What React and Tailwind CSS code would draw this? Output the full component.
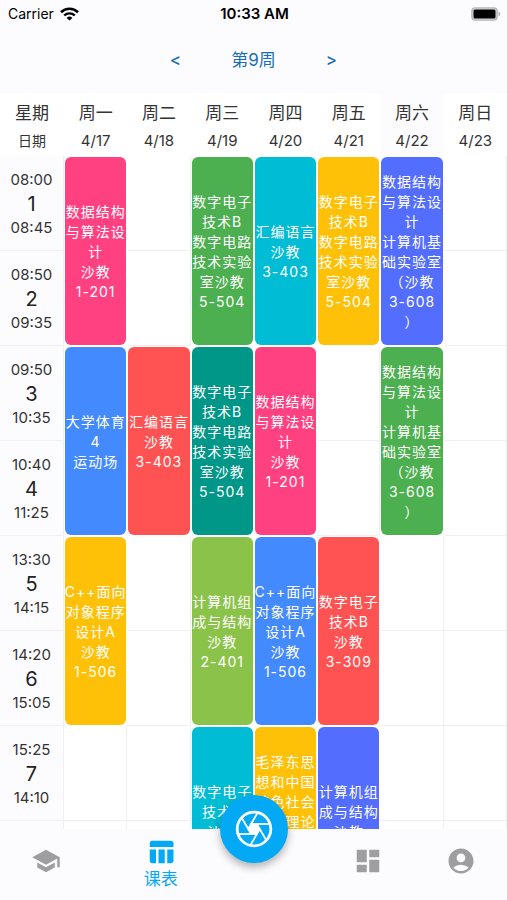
import React from "react";
import { MdSchool, MdTableChart, MdDashboard, MdAccountCircle } from "react-icons/md";

const days = [
  ["周一", "4/17"],
  ["周二", "4/18"],
  ["周三", "4/19"],
  ["周四", "4/20"],
  ["周五", "4/21"],
  ["周六", "4/22"],
  ["周日", "4/23"],
];

const course = (color, ...lines) => ({ color, lines });

const electronicsLab = ["数字电子", "技术B", "数字电路", "技术实验", "室沙教", "5-504"];
const structuresLab = ["数据结构", "与算法设", "计", "计算机基", "础实验室", "（沙教", "3-608", "）"];

// Each block covers two consecutive lessons
const blocks = [
  {
    lessons: [
      ["08:00", 1, "08:45"],
      ["08:50", 2, "09:35"],
    ],
    courses: [
      course("bg-[#ff4081]", "数据结构", "与算法设", "计", "沙教", "1-201"),
      null,
      course("bg-[#4caf50]", ...electronicsLab),
      course("bg-[#00bcd4]", "汇编语言", "沙教", "3-403"),
      course("bg-[#ffc107]", ...electronicsLab),
      course("bg-[#536dfe]", ...structuresLab),
      null,
    ],
  },
  {
    lessons: [
      ["09:50", 3, "10:35"],
      ["10:40", 4, "11:25"],
    ],
    courses: [
      course("bg-[#448aff]", "大学体育", "4", "运动场"),
      course("bg-[#ff5252]", "汇编语言", "沙教", "3-403"),
      course("bg-[#009688]", ...electronicsLab),
      course("bg-[#ff4081]", "数据结构", "与算法设", "计", "沙教", "1-201"),
      null,
      course("bg-[#4caf50]", ...structuresLab),
      null,
    ],
  },
  {
    lessons: [
      ["13:30", 5, "14:15"],
      ["14:20", 6, "15:05"],
    ],
    courses: [
      course("bg-[#ffc107]", "C++面向", "对象程序", "设计A", "沙教", "1-506"),
      null,
      course("bg-[#8bc34a]", "计算机组", "成与结构", "沙教", "2-401"),
      course("bg-[#448aff]", "C++面向", "对象程序", "设计A", "沙教", "1-506"),
      course("bg-[#ff5252]", "数字电子", "技术B", "沙教", "3-309"),
      null,
      null,
    ],
  },
  {
    lessons: [["15:25", 7, "14:10"], null],
    courses: [
      null,
      null,
      course("bg-[#00bcd4]", "数字电子", "技术B", "沙教", "3-309"),
      course("bg-[#ffc107]", "毛泽东思", "想和中国", "特色社会", "主义理论", "体系概论", "沙教", "1-201"),
      course("bg-[#536dfe]", "计算机组", "成与结构", "沙教", "2-401"),
      null,
      null,
    ],
  },
];

function StatusBar() {
  return (
    <div className="grid h-7 grid-cols-3 items-center pr-1.5 pl-2 text-sm text-black">
      <div className="flex items-center gap-1.5">
        <span>Carrier</span>
        <svg className="h-3.5 w-[19px]" viewBox="0 0 19 14" fill="none" stroke="currentColor" aria-hidden="true">
          <path d="M1 5.2a12.2 12.2 0 0 1 17 0" strokeWidth="2.6" />
          <path d="M4.200 8.500a7.600 7.600 0 0 1 10.600 0" strokeWidth="2.4" />
          <path d="M9.5 13.6 6.600 10.900a4.200 4.200 0 0 1 5.800 0z" fill="currentColor" stroke="none" />
        </svg>
      </div>
      <span className="text-center text-[15px] font-semibold">10:33 AM</span>
      <svg className="h-3.5 w-[30px] justify-self-end" viewBox="0 0 30 14" aria-hidden="true">
        <rect x="0.9" y="0.9" width="25.2" height="12.2" rx="3.4" fill="#d9d9db" stroke="#b4b4b6" strokeWidth="1.4" />
        <rect x="2.5" y="2.5" width="22" height="9" rx="1.5" fill="#000" />
        <path d="M27.500 4.600c1.200.4 1.800 1.300 1.800 2.400s-.6 2-1.800 2.400z" fill="#b4b4b6" />
      </svg>
    </div>
  );
}

function LessonTime({ lesson }) {
  return (
    <th scope="row" className="h-[95px] border-r border-b border-[#f0f0f3] bg-[#fcfcff] p-0 font-normal">
      {lesson && (
        <div className="flex flex-col items-center pt-0.5 text-[15px] text-[#333]">
          <span className="leading-6">{lesson[0]}</span>
          <span className="text-xl leading-6 text-[#222]">{lesson[1]}</span>
          <span className="leading-6">{lesson[2]}</span>
        </div>
      )}
    </th>
  );
}

function CourseCell({ item }) {
  return (
    <td rowSpan={2} className="h-[190px] p-px">
      <div
        className={`flex h-full flex-col items-center justify-center rounded-md pt-0.5 text-sm leading-5 tracking-[1px] whitespace-nowrap text-white ${item.color}`}
      >
        {item.lines.map((line, i) => (
          <span key={i}>{line}</span>
        ))}
      </div>
    </td>
  );
}

function EmptyCell() {
  return <td className="h-[95px] border-r border-b border-[#f0f0f3] p-0" />;
}

function Timetable() {
  return (
    <table className="w-full table-fixed border-separate border-spacing-0">
      <thead>
        <tr className="h-[63px]">
          <th scope="col" className="w-16 p-0 font-normal text-[#333]">
            <div className="flex flex-col pt-1">
              <span className="text-[17px] leading-7">星期</span>
              <span className="text-sm leading-7">日期</span>
            </div>
          </th>
          {days.map(([day, date]) => (
            <th
              key={day}
              scope="col"
              className={`p-0 font-normal text-[#333] ${day === "周六" ? "bg-[#fcfcff]" : ""}`}
            >
              <div className="flex flex-col pt-1">
                <span className="text-[17px] leading-7">{day}</span>
                <span className="text-[15px] leading-7">{date}</span>
              </div>
            </th>
          ))}
        </tr>
      </thead>
      <tbody>
        {blocks.map((block, b) => (
          <React.Fragment key={b}>
            <tr>
              <LessonTime lesson={block.lessons[0]} />
              {block.courses.map((item, d) => (item ? <CourseCell key={d} item={item} /> : <EmptyCell key={d} />))}
            </tr>
            <tr>
              <LessonTime lesson={block.lessons[1]} />
              {block.courses.map((item, d) => (item ? null : <EmptyCell key={d} />))}
            </tr>
          </React.Fragment>
        ))}
      </tbody>
    </table>
  );
}

function ShutterIcon() {
  return (
    <svg className="size-10" viewBox="0 0 40 40" fill="none" stroke="currentColor" aria-hidden="true">
      <circle cx="20" cy="20" r="16.8" strokeWidth="2.8" />
      <path d="M17 15h6l3 5-3 5h-6l-3-5z" fill="currentColor" stroke="none" />
      <g strokeWidth="1.8">
        {[0, 60, 120, 180, 240, 300].map((angle) => (
          <path key={angle} d="M16.500 15 H36" transform={`rotate(${angle} 20 20)`} />
        ))}
      </g>
    </svg>
  );
}

function BottomNav() {
  return (
    <nav className="relative grid h-[71px] shrink-0 grid-cols-[1fr_136px_1fr_1fr_1fr] bg-[#fcfcff] text-[#9e9e9e]">
      <button type="button" aria-label="学校" className="flex h-16 items-center justify-center">
        <MdSchool size={30} />
      </button>
      <button
        type="button"
        className="flex flex-col items-center pt-2 text-[17px] leading-6 text-[#03a9f4]"
      >
        <MdTableChart size={30} />
        <span>课表</span>
      </button>
      <button
        type="button"
        aria-label="快门"
        className="absolute -top-[34px] left-1/2 flex size-[68px] -translate-x-1/2 items-center justify-center rounded-full bg-[#03a9f4] text-white shadow-[0_4px_8px_rgba(0,0,0,0.3)]"
      >
        <ShutterIcon />
      </button>
      <button type="button" aria-label="面板" className="col-start-4 flex h-16 items-center justify-center">
        <MdDashboard size={30} />
      </button>
      <button type="button" aria-label="我的" className="flex h-16 items-center justify-center">
        <MdAccountCircle size={30} />
      </button>
    </nav>
  );
}

export default function App() {
  return (
    <div className="flex h-screen flex-col bg-white font-['Inter','Noto_Sans_CJK_SC',sans-serif]">
      <header className="shrink-0 bg-[#fcfcff]">
        <StatusBar />
        <div className="flex h-[65px] items-center justify-center gap-[50px] text-[17px] text-[#1a6fb0]">
          <button type="button" aria-label="上一周" className="font-medium">&lt;</button>
          <span>第9周</span>
          <button type="button" aria-label="下一周" className="font-medium">&gt;</button>
        </div>
      </header>
      <main className="min-h-0 flex-1 overflow-hidden">
        <Timetable />
      </main>
      <BottomNav />
    </div>
  );
}
